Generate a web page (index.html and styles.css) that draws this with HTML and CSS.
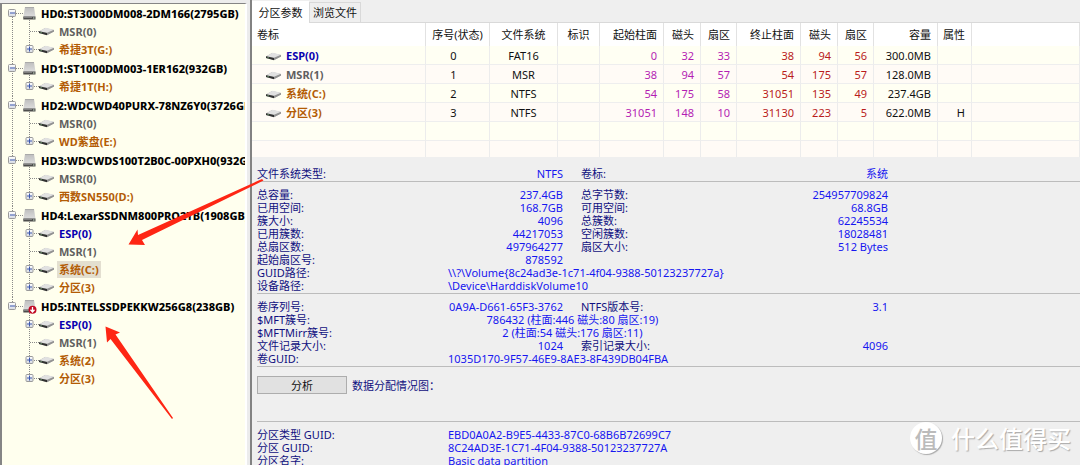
FILE: index.html
```html
<!DOCTYPE html>
<html lang="zh-CN">
<head>
<meta charset="utf-8">
<title>分区参数</title>
<link rel="stylesheet" href="styles.css">
</head>
<body>
<svg class="defs" aria-hidden="true">
  <defs>
    <linearGradient id="metal" x1="0" y1="0" x2="0" y2="1"><stop offset="0" stop-color="#bdbdbd"/><stop offset="1" stop-color="#dedede"/></linearGradient>
    <linearGradient id="face" x1="0" y1="0" x2="0" y2="1"><stop offset="0" stop-color="#fff"/><stop offset="1" stop-color="#d5d9e2"/></linearGradient>
    <g id="dot-trunk"><path class="dots" d="M12.5 0V19"/></g>
    <g id="dot-trunk-start"><path class="dots" d="M12.5 9V19"/></g>
    <g id="dot-trunk-end"><path class="dots" d="M12.5 0V9"/></g>
    <g id="dot-branch"><path class="dots" d="M29.5 0V19M30 9.500H40"/></g>
    <g id="dot-branch-end"><path class="dots" d="M29.5 0V9M30 9.500H40"/></g>
    <g id="minus"><path class="dots" d="M16 9.500H23M29.5 16V19"/><rect x="8.500" y="5.500" width="7" height="7" rx="1" fill="url(#face)" stroke="#9a9a9a"/><path d="M10 9H15" stroke="#3b56ad"/></g>
    <g id="plus"><rect x="26" y="5.500" width="7" height="7" rx="1" fill="url(#face)" stroke="#9a9a9a"/><path d="M27 9H32M29.500 6.500V11.500" stroke="#3b56ad"/></g>
    <g id="disk"><path d="M25 3H34L35.500 13H23.300Z" fill="url(#metal)"/><path d="M25 3.500H34" stroke="#aaa"/><path d="M23.300 12.500H35.500V15.500H23.300Z" fill="#4c4c4c"/><path d="M24 13.300H32" stroke="#8e8e8e"/><rect x="33" y="13.500" width="1.500" height="1" fill="#c8ddc8"/></g>
    <g id="drive-shape"><path d="M0 4.500L6 1L15 3V4.500L8 8L0 6Z" fill="#a9a9a9"/><path d="M0.500 4.300L6.500 .8L15 2.800L8 5.700Z" fill="#e1e1e1"/><path d="M0 4.200L8 5.900V8.200L0 6Z" fill="#303030"/><path d="M8 5.900L15 2.900V4.400L8 8.200Z" fill="#929292"/><path d="M1.500 5.500L3 5.900" stroke="#79ad79" stroke-width=".8"/></g>
    <g id="drive"><use href="#drive-shape" x="39" y="5"/></g>
    <g id="usb-mark"><circle cx="32.500" cy="12.800" r="4" fill="#c20b25"/><path d="M32.500 10V14M30.500 12.800L32.500 15L34.500 12.800" fill="none" stroke="#fff" stroke-width="1.300"/></g>
  </defs>
</svg>

<div class="window">
  <nav class="side" aria-label="磁盘">
    <ul class="tree">
      <li>
        <div class="node"><svg class="twig root"><use href="#dot-trunk-start"/><use href="#minus"/><use href="#disk"/></svg><span class="name disk">HD0:ST3000DM008-2DM166(2795GB)</span></div>
        <ul>
          <li class="node"><svg class="twig"><use href="#dot-trunk"/><use href="#dot-branch"/><use href="#drive"/></svg><span class="name msr">MSR(0)</span></li>
          <li class="node"><svg class="twig"><use href="#dot-trunk"/><use href="#dot-branch-end"/><use href="#plus"/><use href="#drive"/></svg><span class="name data">希捷3T(G:)</span></li>
        </ul>
      </li>
      <li>
        <div class="node"><svg class="twig root"><use href="#dot-trunk"/><use href="#minus"/><use href="#disk"/></svg><span class="name disk">HD1:ST1000DM003-1ER162(932GB)</span></div>
        <ul>
          <li class="node"><svg class="twig"><use href="#dot-trunk"/><use href="#dot-branch-end"/><use href="#plus"/><use href="#drive"/></svg><span class="name data">希捷1T(H:)</span></li>
        </ul>
      </li>
      <li>
        <div class="node"><svg class="twig root"><use href="#dot-trunk"/><use href="#minus"/><use href="#disk"/></svg><span class="name disk">HD2:WDCWD40PURX-78NZ6Y0(3726GB)</span></div>
        <ul>
          <li class="node"><svg class="twig"><use href="#dot-trunk"/><use href="#dot-branch"/><use href="#drive"/></svg><span class="name msr">MSR(0)</span></li>
          <li class="node"><svg class="twig"><use href="#dot-trunk"/><use href="#dot-branch-end"/><use href="#plus"/><use href="#drive"/></svg><span class="name data">WD紫盘(E:)</span></li>
        </ul>
      </li>
      <li>
        <div class="node"><svg class="twig root"><use href="#dot-trunk"/><use href="#minus"/><use href="#disk"/></svg><span class="name disk">HD3:WDCWDS100T2B0C-00PXH0(932GB)</span></div>
        <ul>
          <li class="node"><svg class="twig"><use href="#dot-trunk"/><use href="#dot-branch"/><use href="#drive"/></svg><span class="name msr">MSR(0)</span></li>
          <li class="node"><svg class="twig"><use href="#dot-trunk"/><use href="#dot-branch-end"/><use href="#plus"/><use href="#drive"/></svg><span class="name data">西数SN550(D:)</span></li>
        </ul>
      </li>
      <li>
        <div class="node"><svg class="twig root"><use href="#dot-trunk"/><use href="#minus"/><use href="#disk"/></svg><span class="name disk">HD4:LexarSSDNM800PRO2TB(1908GB)</span></div>
        <ul>
          <li class="node"><svg class="twig"><use href="#dot-trunk"/><use href="#dot-branch"/><use href="#plus"/><use href="#drive"/></svg><span class="name esp">ESP(0)</span></li>
          <li class="node"><svg class="twig"><use href="#dot-trunk"/><use href="#dot-branch"/><use href="#drive"/></svg><span class="name msr">MSR(1)</span></li>
          <li class="node"><svg class="twig"><use href="#dot-trunk"/><use href="#dot-branch"/><use href="#plus"/><use href="#drive"/></svg><span class="name data selected">系统(C:)</span></li>
          <li class="node"><svg class="twig"><use href="#dot-trunk"/><use href="#dot-branch-end"/><use href="#plus"/><use href="#drive"/></svg><span class="name data">分区(3)</span></li>
        </ul>
      </li>
      <li>
        <div class="node"><svg class="twig root"><use href="#dot-trunk-end"/><use href="#minus"/><use href="#disk"/><use href="#usb-mark"/></svg><span class="name disk">HD5:INTELSSDPEKKW256G8(238GB)</span></div>
        <ul>
          <li class="node"><svg class="twig"><use href="#dot-branch"/><use href="#plus"/><use href="#drive"/></svg><span class="name esp">ESP(0)</span></li>
          <li class="node"><svg class="twig"><use href="#dot-branch"/><use href="#drive"/></svg><span class="name msr">MSR(1)</span></li>
          <li class="node"><svg class="twig"><use href="#dot-branch"/><use href="#plus"/><use href="#drive"/></svg><span class="name data">系统(2)</span></li>
          <li class="node"><svg class="twig"><use href="#dot-branch-end"/><use href="#plus"/><use href="#drive"/></svg><span class="name data">分区(3)</span></li>
        </ul>
      </li>
    </ul>
  </nav>

  <main class="main">
    <div class="tabs" role="tablist">
      <button class="tab active" role="tab" aria-selected="true">分区参数</button>
      <button class="tab" role="tab" aria-selected="false">浏览文件</button>
    </div>

    <table class="parts">
      <colgroup><col class="w-label"><col class="w-wide"><col class="w-fs"><col class="w-flag"><col class="w-wide"><col class="w-head"><col class="w-sector"><col class="w-wide"><col class="w-head"><col class="w-sector"><col class="w-wide"><col class="w-attr"><col></colgroup>
      <thead>
        <tr><th class="first">卷标</th><th class="mid">序号(状态)</th><th class="mid">文件系统</th><th class="mid">标识</th><th>起始柱面</th><th>磁头</th><th>扇区</th><th>终止柱面</th><th>磁头</th><th>扇区</th><th>容量</th><th>属性</th><th></th></tr>
      </thead>
      <tbody>
        <tr><td class="vol esp"><svg class="drive"><use href="#drive-shape"/></svg>ESP(0)</td><td class="seq">0</td><td class="mid">FAT16</td><td></td><td class="from">0</td><td class="from">32</td><td class="from">33</td><td class="to">38</td><td class="to">94</td><td class="to">56</td><td>300.0MB</td><td></td><td></td></tr>
        <tr><td class="vol msr"><svg class="drive"><use href="#drive-shape"/></svg>MSR(1)</td><td class="seq">1</td><td class="mid">MSR</td><td></td><td class="from">38</td><td class="from">94</td><td class="from">57</td><td class="to">54</td><td class="to">175</td><td class="to">57</td><td>128.0MB</td><td></td><td></td></tr>
        <tr><td class="vol data"><svg class="drive"><use href="#drive-shape"/></svg>系统(C:)</td><td class="seq">2</td><td class="mid">NTFS</td><td></td><td class="from">54</td><td class="from">175</td><td class="from">58</td><td class="to">31051</td><td class="to">135</td><td class="to">49</td><td>237.4GB</td><td></td><td></td></tr>
        <tr><td class="vol data"><svg class="drive"><use href="#drive-shape"/></svg>分区(3)</td><td class="seq">3</td><td class="mid">NTFS</td><td></td><td class="from">31051</td><td class="from">148</td><td class="from">10</td><td class="to">31130</td><td class="to">223</td><td class="to">5</td><td>622.0MB</td><td>H</td><td></td></tr>
        <tr><td></td><td></td><td></td><td></td><td></td><td></td><td></td><td></td><td></td><td></td><td></td><td></td><td></td></tr>
        <tr class="cut"><td></td><td></td><td></td><td></td><td></td><td></td><td></td><td></td><td></td><td></td><td></td><td></td><td></td></tr>
      </tbody>
    </table>

    <div class="details">
      <section class="block">
        <div class="row"><span class="key">文件系统类型:</span><span class="val">NTFS</span><span class="key2">卷标:</span><span class="val2">系统</span></div>
      </section>
      <section class="block">
        <div class="row"><span class="key">总容量:</span><span class="val">237.4GB</span><span class="key2">总字节数:</span><span class="val2">254957709824</span></div>
        <div class="row"><span class="key">已用空间:</span><span class="val">168.7GB</span><span class="key2">可用空间:</span><span class="val2">68.8GB</span></div>
        <div class="row"><span class="key">簇大小:</span><span class="val">4096</span><span class="key2">总簇数:</span><span class="val2">62245534</span></div>
        <div class="row"><span class="key">已用簇数:</span><span class="val">44217053</span><span class="key2">空闲簇数:</span><span class="val2">18028481</span></div>
        <div class="row"><span class="key">总扇区数:</span><span class="val">497964277</span><span class="key2">扇区大小:</span><span class="val2">512 Bytes</span></div>
        <div class="row"><span class="key">起始扇区号:</span><span class="val">878592</span></div>
        <div class="row"><span class="key">GUID路径:</span><span class="long">\\?\Volume{8c24ad3e-1c71-4f04-9388-50123237727a}</span></div>
        <div class="row"><span class="key">设备路径:</span><span class="long">\Device\HarddiskVolume10</span></div>
      </section>
      <section class="block">
        <div class="row"><span class="key">卷序列号:</span><span class="val">0A9A-D661-65F3-3762</span><span class="key2">NTFS版本号:</span><span class="val2">3.1</span></div>
        <div class="row"><span class="key">$MFT簇号:</span><span class="center">786432 (柱面:446 磁头:80 扇区:19)</span></div>
        <div class="row"><span class="key">$MFTMirr簇号:</span><span class="center">2 (柱面:54 磁头:176 扇区:11)</span></div>
        <div class="row"><span class="key">文件记录大小:</span><span class="val">1024</span><span class="key2">索引记录大小:</span><span class="val2">4096</span></div>
        <div class="row"><span class="key">卷GUID:</span><span class="long">1035D170-9F57-46E9-8AE3-8F439DB04FBA</span></div>
      </section>
      <section class="block usage">
        <button class="analyse">分析</button><span>数据分配情况图：</span>
      </section>
      <section class="block">
        <div class="row"><span class="key">分区类型 GUID:</span><span class="long">EBD0A0A2-B9E5-4433-87C0-68B6B72699C7</span></div>
        <div class="row"><span class="key">分区 GUID:</span><span class="long">8C24AD3E-1C71-4F04-9388-50123237727A</span></div>
        <div class="row"><span class="key">分区名字:</span><span class="long">Basic data partition</span></div>
      </section>
    </div>
  </main>
</div>

<svg class="arrows" aria-hidden="true">
  <path d="M128.500 244.500L137.500 229.500L138 235L262 179L263.500 180.500L142 240L145 245Z"/>
  <path d="M105.500 326.500L120 332.500L115.500 334.500L173 418L172 419L110.500 339L107 342.500Z"/>
</svg>
<div class="watermark"><span class="seal">值</span><span>什么值得买</span></div>
</body>
</html>
```
FILE: styles.css
```css
* { box-sizing: border-box; }

body {
  margin: 0;
  height: 100vh;
  overflow: hidden;
  position: relative;
  background: #efefef;
  color: #111;
  font: 11px/13px "Noto Sans", "Noto Sans CJK SC", sans-serif;
}

button { font: inherit; color: inherit; padding: 0; }
ul { list-style: none; margin: 0; padding: 0; }
.defs { position: absolute; width: 0; height: 0; }
.window { display: flex; height: 100%; }

/* disk tree */
.side {
  flex: 0 0 250px;
  min-width: 0;
  padding: 3px 3px 0 0;
  background: #ececec;
}
.tree {
  height: 100%;
  overflow: hidden;
  background: #ffffee;
  border: solid #858585;
  border-width: 1px 0 0 2px;
  border-right: 2px solid #fff;
}
.tree > li { padding-bottom: 1px; }
.node { display: flex; align-items: center; height: 18px; white-space: nowrap; font-weight: 700; }
.twig { flex: none; width: 55px; height: 18px; margin-left: -2px; margin-right: 2px; overflow: visible; }
.twig.root { width: 37px; }
.name { padding: 2px; color: #000; }
.disk { font-weight: 800; }
.dots { stroke: #8a8a8a; stroke-dasharray: 1 1; fill: none; }
.selected { background: #e3dfd0; }
.name.esp, .esp { color: #0a00b0; }
.name.msr, .msr { color: #5f5f5f; }
.name.data, .data { color: #b35c05; }

/* partition table */
.main { flex: 1; min-width: 0; overflow: hidden; border-left: 2px solid #828282; }
.tabs { display: flex; align-items: flex-end; height: 23px; border-bottom: 1px solid #d9d9d9; }
.tab { width: 52px; height: 20px; border: 1px solid #d9d9d9; border-bottom: 0; background: #efefef; }
.tab.active { width: 57px; height: 22px; margin-bottom: -1px; border-color: #fff; background: #fff; }

.parts { width: 100%; table-layout: fixed; border-collapse: separate; border-spacing: 0; white-space: nowrap; }
.parts th, .parts td { height: 19px; padding: 0 6px 0 0; border-right: 1px solid #ececec; text-align: right; font-weight: 400; }
.parts th { height: 23px; background: #fff; border-color: #e2e2e2; }
.parts td { border-bottom: 1px solid #eee; background: #fffff3; }
.parts tr:nth-child(even) td { background: #fffbf6; }
.parts .cut td { height: 16px; border-bottom: 0; }
.parts .first { text-align: left; padding-left: 5px; }
.parts .mid { text-align: center; padding: 0; }
.parts .seq { text-align: center; padding: 0 8px 0 0; }
.parts .vol { text-align: left; padding-left: 14px; font-weight: 700; }
.drive { width: 15px; height: 9px; margin-right: 5px; vertical-align: middle; }
.from { color: #b41eb4; }
.to { color: #b91c1c; }
.w-label { width: 174px; }
.w-wide { width: 64px; }
.w-fs { width: 68px; }
.w-flag { width: 42px; }
.w-head { width: 37px; }
.w-sector { width: 36px; }
.w-attr { width: 34px; }

/* partition details */
.details { padding: 4px 0 0 5px; color: #101080; white-space: nowrap; }
.block { padding: 6px 0 1px; }
.block + .block { border-top: 1px solid #bcbcbc; }
.row {
  display: grid;
  grid-template-columns: 191px 115px 18px 1fr 1fr;
  width: 631px;
  height: 13px;
}
.row > * { grid-row: 1; }
.val, .val2, .long, .center { color: #1616f0; }
.key { grid-column: 1; }
.val { grid-column: 2; text-align: right; }
.key2 { grid-column: 4; }
.val2 { grid-column: 5; text-align: right; }
.long { grid-column: 2 / -1; }
.center { grid-column: 1 / -1; text-align: center; }
.usage { display: flex; align-items: center; gap: 5px; padding: 9px 0 27px; }
.analyse { width: 90px; height: 18px; border: 1px solid #adadad; background: #e1e1e1; color: #111; }

/* overlays */
.arrows { position: absolute; left: 0; top: 0; width: 100%; height: 100%; fill: #fe2614; pointer-events: none; }
.watermark {
  position: absolute;
  right: 9px;
  bottom: 11px;
  display: flex;
  align-items: center;
  gap: 9px;
  color: #fff;
  font: 500 24px/32px "Noto Sans CJK SC", sans-serif;
  text-shadow: 1px 1px 1px #aaa;
}
.seal {
  width: 32px;
  height: 32px;
  border-radius: 50%;
  background: #fff;
  box-shadow: 1px 1px 1px #aaa;
  color: #bbb;
  font-size: 23px;
  text-align: center;
  text-shadow: none;
}
```
